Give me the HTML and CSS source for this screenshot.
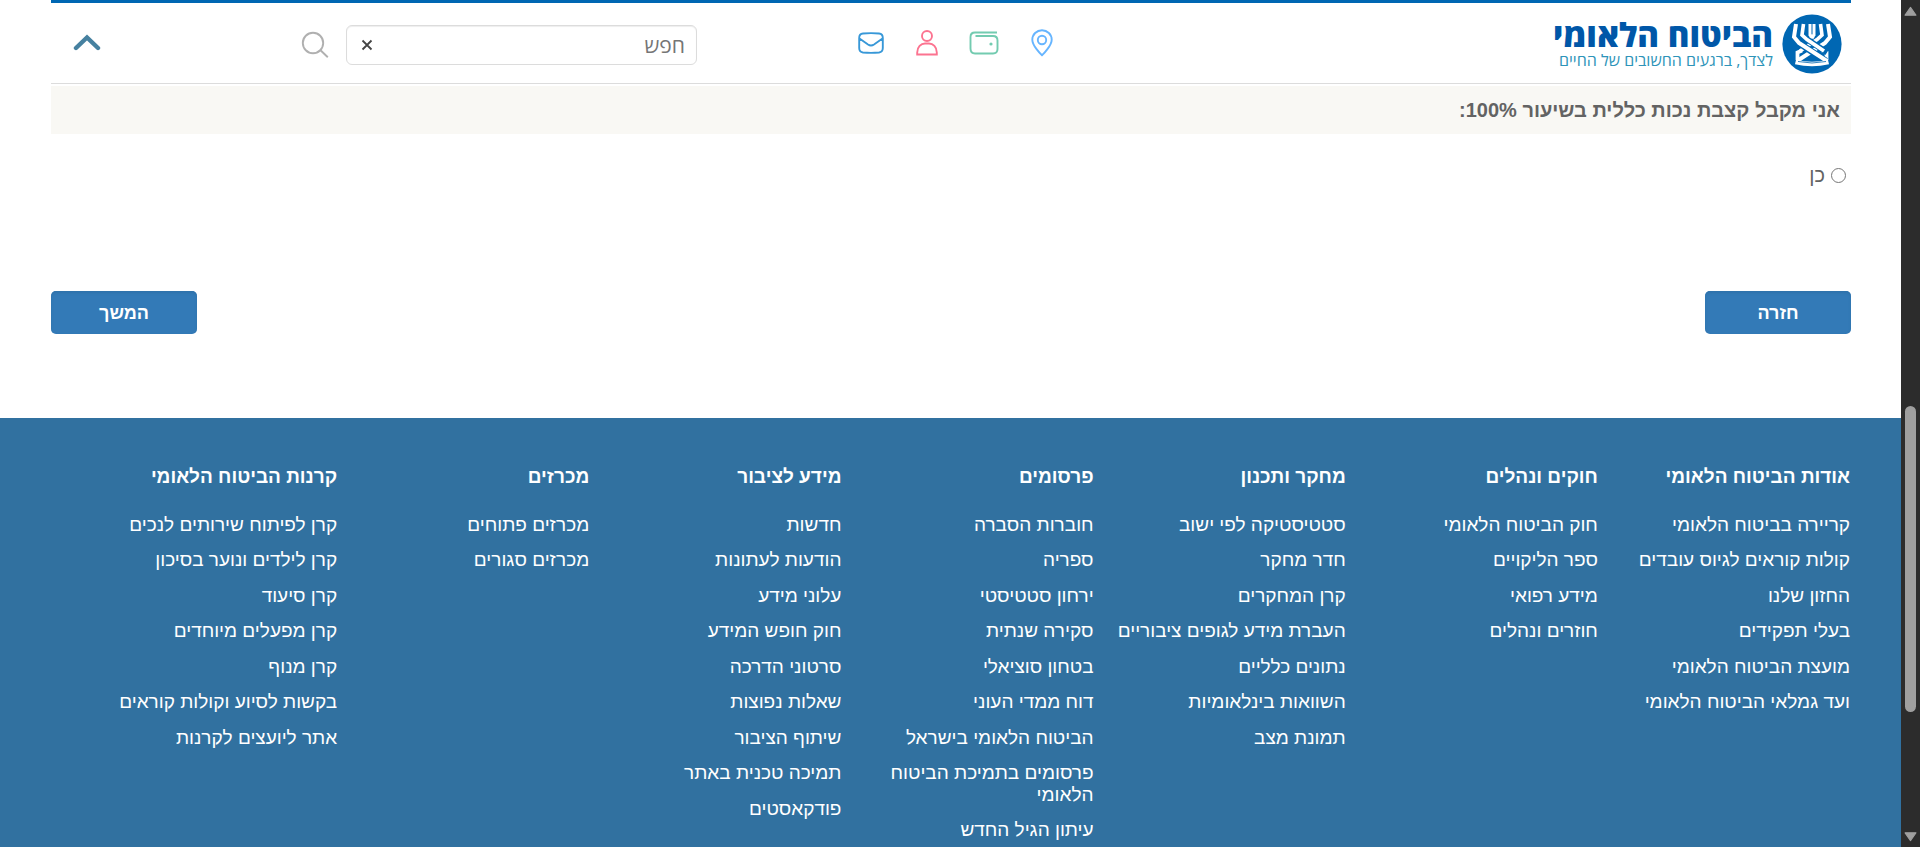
FILE: index.html
```html
<!DOCTYPE html>
<html lang="he" dir="rtl">
<head>
<meta charset="utf-8">
<title>הביטוח הלאומי</title>
<link rel="stylesheet" href="styles.css">
</head>
<body>
<div class="window">
  <div class="scrollbar" aria-hidden="true">
    <svg class="arrow" viewBox="0 0 12 10"><path d="M6 1.2 11 8.4H1Z"/></svg>
    <div class="track"><div class="thumb"></div></div>
    <svg class="arrow" viewBox="0 0 12 10"><path d="M6 8.8 11 1.6H1Z"/></svg>
  </div>
  <div class="page">
    <div class="container">
      <header class="header">
        <a class="brand" href="#">
          <svg class="emblem" viewBox="0 0 60 60" aria-hidden="true">
            <circle cx="30" cy="30" r="29.6" fill="#0067b3"/>
            <g fill="none" stroke="#fff" stroke-width="4" stroke-linejoin="miter">
              <path d="M28 10V21L32 24M32 10V21L28 24" stroke-width="3"/>
              <path d="M38.500 10 40 21 35 25.500 18 37" stroke-width="3.600"/>
              <path d="M46 10 48 23 43 29 15 47"/>
              <path d="M20 36.500 15.500 38.500V46M40 36.500 44.500 38.500V46" stroke-width="3.800"/>
              <path d="M26 26 45 38.500" stroke="#0067b3" stroke-width="6"/>
              <path d="M17 29 44 47" stroke="#0067b3" stroke-width="6.600"/>
              <path d="M21.500 10 20 21 25 25.500 42 37" stroke-width="3.600"/>
              <path d="M14 10 12 23 17 29 45 47"/>
              <path d="M13.500 48Q30 52 46.500 48" stroke-width="4.400"/>
              <path d="M16 47.500Q30 50.500 44 47.500" stroke="#0067b3" stroke-width=".8"/>
            </g>
          </svg>
          <span class="brand-text">
            <span class="brand-name">הביטוח הלאומי</span>
            <span class="brand-tag">לצדך, ברגעים החשובים של החיים</span>
          </span>
        </a>
        <nav class="quick">
          <a href="#" aria-label="סניפים"><svg width="22" height="28" viewBox="0 0 22 28" fill="none" stroke="#66b5ff" stroke-width="1.9"><path d="M11 26.2C9.500 25 1.300 16.500 1.300 10.700a9.700 9.500 0 0 1 19.400 0C20.700 16.500 12.500 25 11 26.200Z"/><circle cx="11" cy="11" r="4.200"/></svg></a>
          <a href="#" aria-label="תשלומים"><svg width="30" height="24" viewBox="0 0 30 24" fill="none" stroke="#73cbb0" stroke-width="1.9"><path d="M28 1.500H6Q1.500 1.500 1.500 6V17.500Q1.500 22.500 6 22.500H24Q28.500 22.500 28.500 18V9.500Q28.500 5 24 5H6.500"/><circle cx="22" cy="13" r="1.600" fill="#73cbb0" stroke="none"/></svg></a>
          <a href="#" aria-label="אזור אישי"><svg width="22" height="26" viewBox="0 0 22 26" fill="none" stroke="#fc7390" stroke-width="1.900"><circle cx="11" cy="6" r="5"/><path d="M1.200 24.500V22.500C1.200 17 5 13.500 9 13.500H13C17 13.500 20.800 17 20.800 22.500V24.500Z"/></svg></a>
          <a href="#" aria-label="יצירת קשר"><svg width="26" height="22" viewBox="0 0 26 22" fill="none" stroke="#3898d8" stroke-width="1.900"><path d="M5 1.500Q13 .8 21 1.500 24.800 1.800 24.800 6V16Q24.800 20 21 20.500 13 21.200 5 20.500 1.200 20 1.200 16V6Q1.200 1.800 5 1.500ZM1.500 6.500 10 12.500Q13 14.500 16 12.500L24.500 6.500"/></svg></a>
        </nav>
        <form class="search">
          <div class="search-box">
            <input type="text" placeholder="חפש" aria-label="חפש">
            <button class="clear" type="button" aria-label="נקה"><svg width="12" height="12" viewBox="0 0 12 12" fill="none" stroke="#444" stroke-width="1.800"><path d="m1.500 1.500 9 9m0-9-9 9"/></svg></button>
          </div>
          <button class="find" type="button" aria-label="חיפוש"><svg width="28" height="28" viewBox="0 0 28 28" fill="none" stroke="#b0b0b0" stroke-width="1.900"><circle cx="12" cy="12" r="10.200"/><path d="m19 18.800 7.800 7.400"/></svg></button>
        </form>
        <button class="collapse" type="button" aria-label="סגור"><svg width="28" height="18" viewBox="0 0 28 18" fill="none" stroke="#4681a0" stroke-width="4.400" stroke-linecap="round"><path d="M3 14 14 3.500 25 14"/></svg></button>
      </header>
      <main>
        <form>
          <h2 class="question" id="q">אני מקבל קצבת נכות כללית בשיעור 100%:</h2>
          <div class="answers" role="radiogroup" aria-labelledby="q">
            <input type="radio" id="yes" name="rate"><label for="yes">כן</label>
          </div>
          <div class="actions">
            <button type="button">חזרה</button>
            <button type="button">המשך</button>
          </div>
        </form>
      </main>
    </div>
    <footer class="footer">
      <section><h3>אודות הביטוח הלאומי</h3><ul>
        <li><a href="#">קריירה בביטוח הלאומי</a></li>
        <li><a href="#">קולות קוראים לגיוס עובדים</a></li>
        <li><a href="#">החזון שלנו</a></li>
        <li><a href="#">בעלי תפקידים</a></li>
        <li><a href="#">מועצת הביטוח הלאומי</a></li>
        <li><a href="#">ועד גמלאי הביטוח הלאומי</a></li>
      </ul></section>
      <section><h3>חוקים ונהלים</h3><ul>
        <li><a href="#">חוק הביטוח הלאומי</a></li>
        <li><a href="#">ספר הליקויים</a></li>
        <li><a href="#">מידע רפואי</a></li>
        <li><a href="#">חוזרים ונהלים</a></li>
      </ul></section>
      <section><h3>מחקר ותכנון</h3><ul>
        <li><a href="#">סטטיסטיקה לפי ישוב</a></li>
        <li><a href="#">חדר מחקר</a></li>
        <li><a href="#">קרן המחקרים</a></li>
        <li><a href="#">העברת מידע לגופים ציבוריים</a></li>
        <li><a href="#">נתונים כלליים</a></li>
        <li><a href="#">השוואות בינלאומיות</a></li>
        <li><a href="#">תמונת מצב</a></li>
      </ul></section>
      <section><h3>פרסומים</h3><ul>
        <li><a href="#">חוברות הסברה</a></li>
        <li><a href="#">ספריה</a></li>
        <li><a href="#">ירחון סטטיסטי</a></li>
        <li><a href="#">סקירה שנתית</a></li>
        <li><a href="#">בטחון סוציאלי</a></li>
        <li><a href="#">דוח ממדי העוני</a></li>
        <li><a href="#">הביטוח הלאומי בישראל</a></li>
        <li><a href="#">פרסומים בתמיכת הביטוח הלאומי</a></li>
        <li><a href="#">עיתון הגיל החדש</a></li>
      </ul></section>
      <section><h3>מידע לציבור</h3><ul>
        <li><a href="#">חדשות</a></li>
        <li><a href="#">הודעות לעתונות</a></li>
        <li><a href="#">עלוני מידע</a></li>
        <li><a href="#">חוק חופש המידע</a></li>
        <li><a href="#">סרטוני הדרכה</a></li>
        <li><a href="#">שאלות נפוצות</a></li>
        <li><a href="#">שיתוף הציבור</a></li>
        <li><a href="#">תמיכה טכנית באתר</a></li>
        <li><a href="#">פודקאסטים</a></li>
      </ul></section>
      <section><h3>מכרזים</h3><ul>
        <li><a href="#">מכרזים פתוחים</a></li>
        <li><a href="#">מכרזים סגורים</a></li>
      </ul></section>
      <section><h3>קרנות הביטוח הלאומי</h3><ul>
        <li><a href="#">קרן לפיתוח שירותים לנכים</a></li>
        <li><a href="#">קרן לילדים ונוער בסיכון</a></li>
        <li><a href="#">קרן סיעוד</a></li>
        <li><a href="#">קרן מפעלים מיוחדים</a></li>
        <li><a href="#">קרן מנוף</a></li>
        <li><a href="#">בקשות לסיוע וקולות קוראים</a></li>
        <li><a href="#">אתר ליועצים לקרנות</a></li>
      </ul></section>
    </footer>
  </div>
</div>
</body>
</html>
```
FILE: styles.css
```css
* { box-sizing: border-box; }
body { margin: 0; font-family: "Liberation Sans", Arial, sans-serif; font-size: 20px; color: #636363; background: #fff; }
button { font: inherit; border: 0; padding: 0; background: none; cursor: pointer; }
svg { display: block; flex: none; }
a { text-decoration: none; }
.window { display: flex; height: 100vh; overflow: hidden; }
.scrollbar { width: 19px; flex: none; background: #2c2c2c; display: flex; flex-direction: column; align-items: center; padding: 6px 0 5px; }
.arrow { width: 13px; height: 11px; fill: #9f9f9f; stroke: #9f9f9f; stroke-width: 1; stroke-linejoin: round; }
.track { flex: 1; display: flex; flex-direction: column; justify-content: flex-end; padding-bottom: 119px; }
.thumb { width: 11px; height: 306px; border-radius: 6px; background: #9f9f9f; }
.page { flex: 1; min-width: 0; display: flex; flex-direction: column; }
.container { padding: 0 50px 0 51px; }

.header { height: 84px; border-top: 3px solid #0067b3; border-bottom: 1px solid #dcdcdc; display: grid; grid-template-columns: 798px 195px 1fr auto; align-items: center; margin-bottom: 2px; }
.brand { display: flex; gap: 9px; padding: 2px 9px 0 0; align-items: center; font-family: "Open Sans", "Noto Sans", sans-serif; }
.emblem { width: 60px; height: 60px; }
.brand-text { display: flex; flex-direction: column; padding-bottom: 3px; }
.brand-name { font-size: 33px; line-height: 34px; font-weight: 800; color: #0057a8; }
.brand-tag { font-size: 16px; line-height: 16px; color: #2e94b9; }
.quick { display: flex; justify-content: space-between; align-items: center; }
.search { display: flex; align-items: center; gap: 17px; padding: 3px 161px 0 0; }
.search-box { width: 351px; height: 40px; border: 1px solid #dcdcdc; border-radius: 6px; box-shadow: inset 0 1px 1px #eee; display: flex; align-items: center; padding: 0 11px 0 14px; }
.search-box input { flex: 1; min-width: 0; border: 0; outline: 0; background: none; font: 21px "Open Sans", "Noto Sans", sans-serif; padding: 0; }
.search-box input::placeholder { color: #757575; opacity: 1; }
.collapse { margin-left: 22px; }

.question { margin: 0; height: 48px; line-height: 48px; padding: 0 11px; background: #f9f8f4; font-size: 20px; font-weight: 700; }
.answers { display: flex; align-items: center; gap: 6px; padding: 27px 5px 0; line-height: 28px; }
.answers input { width: 15px; height: 15px; margin: 0; }
.actions { display: flex; justify-content: space-between; padding: 102px 0 84px; }
.actions button { width: 146px; height: 43px; padding-top: 2px; border-radius: 5px; background: #337ab7; color: #fff; font-size: 18px; font-weight: 700; box-shadow: inset 0 2px 3px #2f72ab; }

.footer { flex: 1; background: #3171a0; padding: 47px 51px 0 85px; display: grid; grid-template-columns: repeat(7, 1fr); }
.footer h3 { margin: 0 0 25px; font-size: 19px; line-height: 24px; color: #fff; }
.footer ul { margin: 0; padding: 0 0 0 18px; list-style: none; display: grid; gap: 14px; }
.footer li { font-size: 19px; line-height: 1.13; }
.footer a { color: #fff; }
```
